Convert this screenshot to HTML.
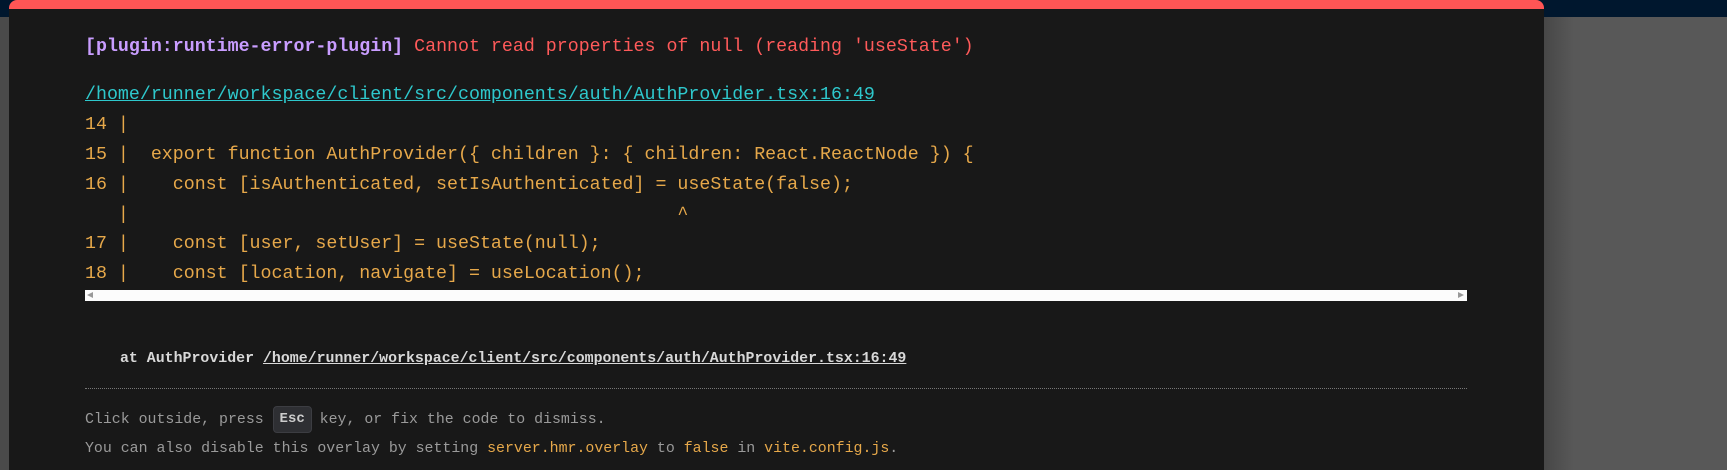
<!DOCTYPE html>
<html><head><meta charset="utf-8"><style>
html,body{margin:0;padding:0;width:1727px;height:470px;overflow:hidden;background:#585858;}
.nav{position:absolute;left:0;top:0;width:1727px;height:17px;background:#00172e;}
.shadow{position:absolute;left:1544px;top:17px;width:30px;height:453px;background:linear-gradient(90deg,#474747,#585858);}
.lstrip{position:absolute;left:0;top:17px;width:9px;height:453px;background:#4a4a4a;}
.panel{position:absolute;left:9px;top:0;width:1535px;height:470px;background:#181818;border-top:9px solid #ff5555;border-radius:8px 8px 0 0;box-sizing:border-box;}
.t{position:absolute;white-space:pre;font-family:"Liberation Mono",monospace;line-height:30px;}
.code{font-size:18.3px;color:#e6a84a;left:85px;}
.sb{position:absolute;left:85px;top:290px;width:1382px;height:11px;background:#fcfcfc;}
.dots{position:absolute;left:85px;top:388px;width:1382px;border-top:1px dotted #777;}
.kbd{display:inline-block;vertical-align:middle;margin:0 8px 0 0;width:39px;height:27px;background:#2e2f33;border:1px solid #3c3d42;border-radius:4px;box-sizing:border-box;color:#ccc;font:bold 14px "Liberation Mono",monospace;text-align:center;line-height:25px;}
</style></head><body>
<div class="nav"></div>
<div class="lstrip"></div>
<div class="shadow"></div>
<div class="panel"></div>
<div class="t" style="left:85px;top:32px;font-size:18.3px;font-weight:bold"><span style="color:#c99dff">[plugin:runtime-error-plugin]</span> <span style="color:#ff5a5a;font-weight:normal">Cannot read properties of null (reading 'useState')</span></div>
<div class="t" style="left:85px;top:80px;font-size:18.3px;color:#2ec8cc;text-decoration:underline">/home/runner/workspace/client/src/components/auth/AuthProvider.tsx:16:49</div>
<div class="t code" style="top:110px">14 |</div>
<div class="t code" style="top:140px">15 |  export function AuthProvider({ children }: { children: React.ReactNode }) {</div>
<div class="t code" style="top:170px">16 |    const [isAuthenticated, setIsAuthenticated] = useState(false);</div>
<div class="t code" style="top:200px">   |                                                  ^</div>
<div class="t code" style="top:229px">17 |    const [user, setUser] = useState(null);</div>
<div class="t code" style="top:259px">18 |    const [location, navigate] = useLocation();</div>
<div class="sb"><div style="position:absolute;left:2px;top:2px;width:0;height:0;border-top:3.5px solid transparent;border-bottom:3.5px solid transparent;border-right:6px solid #999"></div><div style="position:absolute;right:3px;top:2px;width:0;height:0;border-top:3.5px solid transparent;border-bottom:3.5px solid transparent;border-left:6px solid #999"></div></div>
<div class="t" style="left:120px;top:344px;font-size:14.9px;color:#d8d8d8;font-weight:bold">at AuthProvider <span style="text-decoration:underline">/home/runner/workspace/client/src/components/auth/AuthProvider.tsx:16:49</span></div>
<div class="dots"></div>
<div class="t" style="left:85px;top:405px;font-size:14.9px;color:#9a9a9a">Click outside, press <span class="kbd">Esc</span>key, or fix the code to dismiss.</div>
<div class="t" style="left:85px;top:434px;font-size:14.9px;color:#9a9a9a">You can also disable this overlay by setting <span style="color:#e6a84a">server.hmr.overlay</span> to <span style="color:#e6a84a">false</span> in <span style="color:#e6a84a">vite.config.js</span>.</div>
</body></html>
